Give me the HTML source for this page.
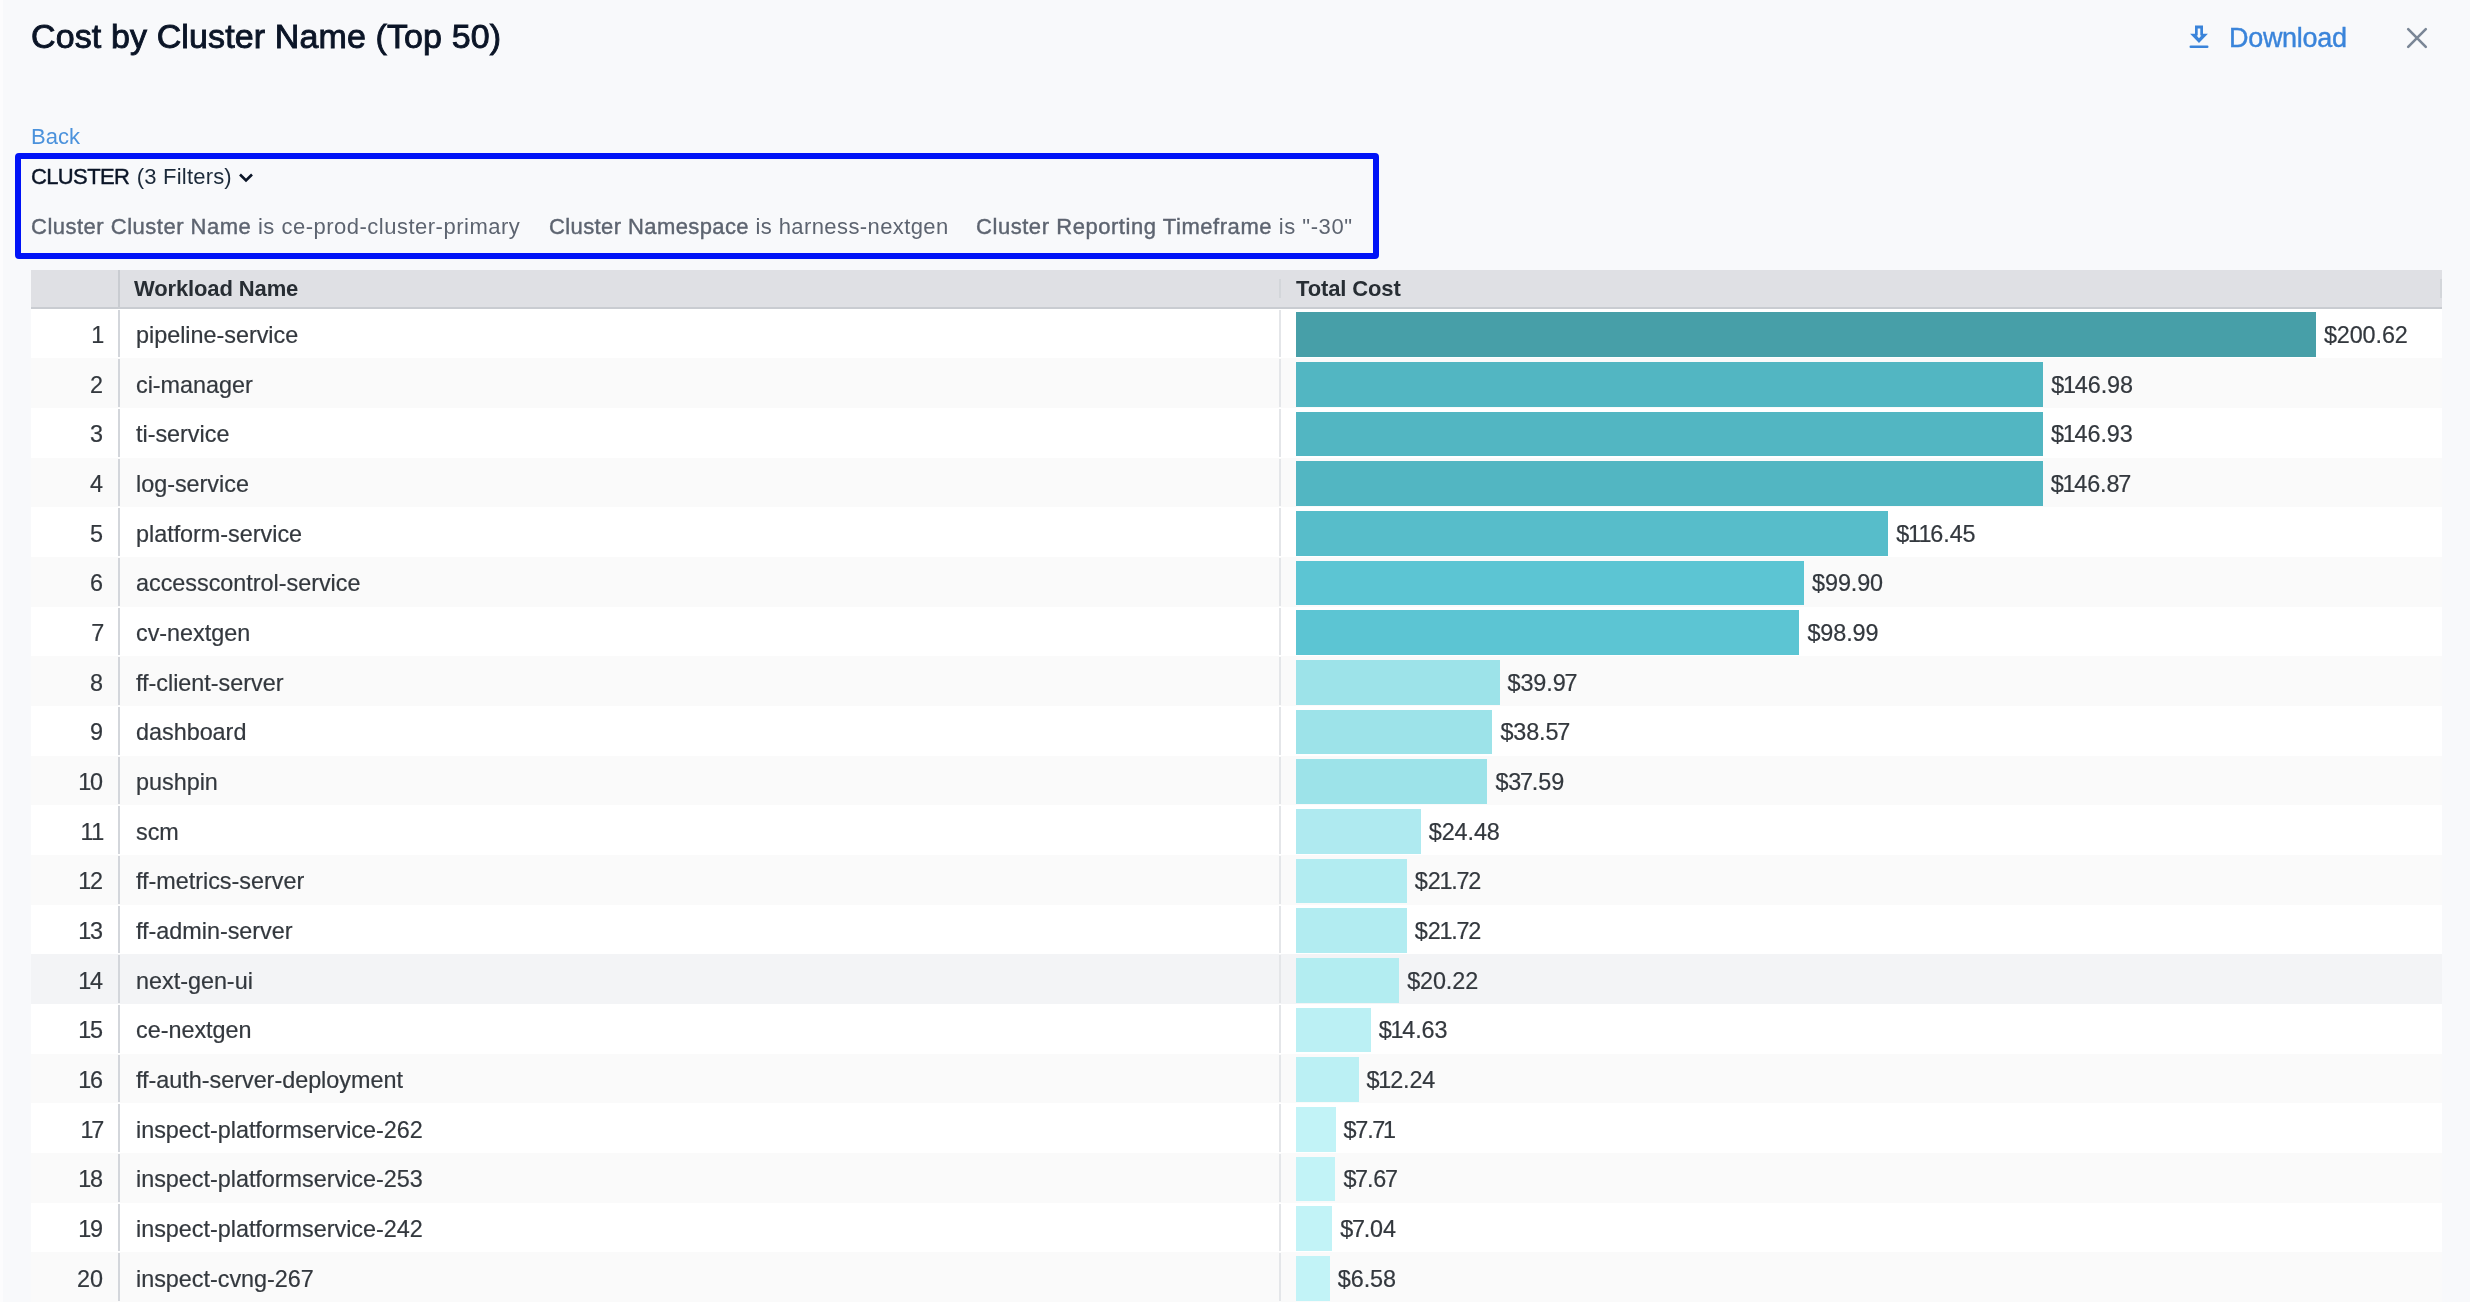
<!DOCTYPE html><html><head><meta charset="utf-8"><style>
*{margin:0;padding:0;box-sizing:border-box}
html,body{width:2470px;height:1302px;overflow:hidden;background:#f8f9fb;font-family:"Liberation Sans",sans-serif;font-variant-ligatures:none}
.a{position:absolute;white-space:pre;line-height:1}
#strip{position:absolute;left:0;top:0;width:3px;height:1302px;background:#fcfcfd}
#title{left:31px;top:19px;font-size:34px;letter-spacing:0.12px;color:#0b1527;-webkit-text-stroke:0.9px #0b1527}
#dl{left:2229px;top:24.7px;font-size:27px;letter-spacing:-0.3px;color:#3a84da;-webkit-text-stroke:0.4px #3a84da}
#back{left:31px;top:125.5px;font-size:22px;color:#4b92dc}
#box{position:absolute;left:15px;top:153px;width:1364px;height:106px;border:6px solid #0013f7;border-radius:4px}
#cl{left:31px;top:166px;letter-spacing:-0.1px;font-size:22px;color:#0b1527}
#cl b{font-weight:400;-webkit-text-stroke:0.4px #0b1527;letter-spacing:-0.63px}
#cl span{color:#1c2a3a;letter-spacing:0.2px;margin-left:1.5px}
#flt{left:31px;top:216px;font-size:22px;color:#5d6470;letter-spacing:0.5px}
#flt b{font-weight:400;-webkit-text-stroke:0.4px #5d6470}
#hdr{position:absolute;left:31px;top:270px;width:2411px;height:39px;background:#dfe0e4;border-bottom:2px solid #c9ccd1}
#sep1h{position:absolute;left:118px;top:270px;width:2px;height:37px;background:#c9ccd1}
#sep2h{position:absolute;left:1279px;top:279px;width:2px;height:19px;background:#d3d6da}
.h{font-size:22px;font-weight:700;color:#272d33;top:278px;letter-spacing:-0.13px}
.row{position:absolute;left:31px;width:2411px}
.num{position:absolute;right:0;width:72px;text-align:right;font-size:23.4px;color:#33383e;-webkit-text-stroke:0.2px #33383e}
.nm{font-size:23.4px;color:#33383e;left:136px;letter-spacing:-0.02px;-webkit-text-stroke:0.2px #33383e}
.bar{position:absolute;left:1296.4px}
.lbl{font-size:23.4px;color:#33383e;letter-spacing:-0.1px;-webkit-text-stroke:0.2px #33383e}
.nn{letter-spacing:-1.2px;margin-left:-1.2px}
.sep{position:absolute;width:2px;background:#d3d6db}
</style></head><body>
<div id="root" style="position:absolute;left:0;top:0;width:2470px;height:1302px;will-change:transform">
<div id="strip"></div>
<div class="a" id="title">Cost by Cluster Name (Top 50)</div>
<svg style="position:absolute;left:2186px;top:22px" width="26" height="28" viewBox="0 0 26 28"><path fill-rule="evenodd" fill="#3a84da" d="M9 3.5 H17 V11.8 H21.9 L13 21.1 L4.1 11.8 H9 Z M11.7 6.6 V13.6 H10.6 L13 16.2 L15.4 13.6 H14.3 V6.6 Z"/><rect x="3.5" y="23.6" width="19" height="2.4" rx="1.2" fill="#3a84da"/></svg>
<div class="a" id="dl">Download</div>
<svg style="position:absolute;left:2405px;top:26px" width="24" height="24" viewBox="0 0 24 24"><path d="M3.2 3.2 L20.8 20.8 M20.8 3.2 L3.2 20.8" stroke="#7a8696" stroke-width="2.6" stroke-linecap="round"/></svg>
<div class="a" id="back">Back</div>
<div id="box"></div>
<div class="a" id="cl"><b>CLUSTER</b> <span>(3 Filters)</span></div>
<svg style="position:absolute;left:238px;top:172px" width="16" height="12" viewBox="0 0 16 12"><path d="M2 2.5 L8 8.5 L14 2.5" fill="none" stroke="#0b1527" stroke-width="2.6"/></svg>
<div class="a" id="flt"><b>Cluster Cluster Name</b> is ce-prod-cluster-primary</div>
<div class="a" id="flt2" style="left:549px;top:216px;font-size:22px;color:#5d6470;letter-spacing:0.4px"><b style="font-weight:400;-webkit-text-stroke:0.4px #5d6470">Cluster Namespace</b> is harness-nextgen</div>
<div class="a" id="flt3" style="left:976px;top:216px;font-size:22px;color:#5d6470;letter-spacing:0.55px"><b style="font-weight:400;-webkit-text-stroke:0.4px #5d6470">Cluster Reporting Timeframe</b> is "-30"</div>
<div id="hdr"></div><div id="sep1h"></div><div id="sep2h"></div><div id="sep3h" style="position:absolute;left:2440px;top:279px;width:2px;height:19px;background:#d3d6da"></div>
<div class="a h" style="left:134px">Workload Name</div>
<div class="a h" style="left:1296px">Total Cost</div>
<div class="row" style="top:308.80px;height:49.66px;background:#ffffff"></div>
<div class="sep" style="left:118px;top:309.80px;height:47.66px"></div>
<div class="sep" style="left:1279px;top:309.80px;height:47.66px;background:#e4e6e9"></div>
<div class="a num" style="left:31px;width:72px;top:324.00px"><span class="nn">1</span></div>
<div class="a nm" style="top:324.00px">pipeline-service</div>
<div class="bar" style="top:312.30px;width:1019.50px;height:44.7px;background:#479fa8"></div>
<div class="a lbl" style="left:2323.90px;top:324.00px">$200.62</div>
<div class="row" style="top:358.46px;height:49.66px;background:#fafafa"></div>
<div class="sep" style="left:118px;top:359.46px;height:47.66px"></div>
<div class="sep" style="left:1279px;top:359.46px;height:47.66px;background:#e4e6e9"></div>
<div class="a num" style="left:31px;width:72px;top:373.66px">2</div>
<div class="a nm" style="top:373.66px">ci-manager</div>
<div class="bar" style="top:361.96px;width:746.92px;height:44.7px;background:#52b6c2"></div>
<div class="a lbl" style="left:2051.32px;top:373.66px">$<span class="nn">1</span>46.98</div>
<div class="row" style="top:408.12px;height:49.66px;background:#ffffff"></div>
<div class="sep" style="left:118px;top:409.12px;height:47.66px"></div>
<div class="sep" style="left:1279px;top:409.12px;height:47.66px;background:#e4e6e9"></div>
<div class="a num" style="left:31px;width:72px;top:423.32px">3</div>
<div class="a nm" style="top:423.32px">ti-service</div>
<div class="bar" style="top:411.62px;width:746.66px;height:44.7px;background:#52b6c2"></div>
<div class="a lbl" style="left:2051.06px;top:423.32px">$<span class="nn">1</span>46.93</div>
<div class="row" style="top:457.78px;height:49.66px;background:#fafafa"></div>
<div class="sep" style="left:118px;top:458.78px;height:47.66px"></div>
<div class="sep" style="left:1279px;top:458.78px;height:47.66px;background:#e4e6e9"></div>
<div class="a num" style="left:31px;width:72px;top:472.98px">4</div>
<div class="a nm" style="top:472.98px">log-service</div>
<div class="bar" style="top:461.28px;width:746.36px;height:44.7px;background:#52b6c2"></div>
<div class="a lbl" style="left:2050.76px;top:472.98px">$<span class="nn">1</span>46.8<span class="nn">7</span></div>
<div class="row" style="top:507.44px;height:49.66px;background:#ffffff"></div>
<div class="sep" style="left:118px;top:508.44px;height:47.66px"></div>
<div class="sep" style="left:1279px;top:508.44px;height:47.66px;background:#e4e6e9"></div>
<div class="a num" style="left:31px;width:72px;top:522.64px">5</div>
<div class="a nm" style="top:522.64px">platform-service</div>
<div class="bar" style="top:510.94px;width:591.77px;height:44.7px;background:#57bdca"></div>
<div class="a lbl" style="left:1896.17px;top:522.64px">$<span class="nn">1</span><span class="nn">1</span>6.45</div>
<div class="row" style="top:557.10px;height:49.66px;background:#fafafa"></div>
<div class="sep" style="left:118px;top:558.10px;height:47.66px"></div>
<div class="sep" style="left:1279px;top:558.10px;height:47.66px;background:#e4e6e9"></div>
<div class="a num" style="left:31px;width:72px;top:572.30px">6</div>
<div class="a nm" style="top:572.30px">accesscontrol-service</div>
<div class="bar" style="top:560.60px;width:507.67px;height:44.7px;background:#5cc5d3"></div>
<div class="a lbl" style="left:1812.07px;top:572.30px">$99.90</div>
<div class="row" style="top:606.76px;height:49.66px;background:#ffffff"></div>
<div class="sep" style="left:118px;top:607.76px;height:47.66px"></div>
<div class="sep" style="left:1279px;top:607.76px;height:47.66px;background:#e4e6e9"></div>
<div class="a num" style="left:31px;width:72px;top:621.96px"><span class="nn">7</span></div>
<div class="a nm" style="top:621.96px">cv-nextgen</div>
<div class="bar" style="top:610.26px;width:503.04px;height:44.7px;background:#5cc5d3"></div>
<div class="a lbl" style="left:1807.44px;top:621.96px">$98.99</div>
<div class="row" style="top:656.42px;height:49.66px;background:#fafafa"></div>
<div class="sep" style="left:118px;top:657.42px;height:47.66px"></div>
<div class="sep" style="left:1279px;top:657.42px;height:47.66px;background:#e4e6e9"></div>
<div class="a num" style="left:31px;width:72px;top:671.62px">8</div>
<div class="a nm" style="top:671.62px">ff-client-server</div>
<div class="bar" style="top:659.92px;width:203.12px;height:44.7px;background:#9de3e9"></div>
<div class="a lbl" style="left:1507.52px;top:671.62px">$39.9<span class="nn">7</span></div>
<div class="row" style="top:706.08px;height:49.66px;background:#ffffff"></div>
<div class="sep" style="left:118px;top:707.08px;height:47.66px"></div>
<div class="sep" style="left:1279px;top:707.08px;height:47.66px;background:#e4e6e9"></div>
<div class="a num" style="left:31px;width:72px;top:721.28px">9</div>
<div class="a nm" style="top:721.28px">dashboard</div>
<div class="bar" style="top:709.58px;width:196.00px;height:44.7px;background:#9de3e9"></div>
<div class="a lbl" style="left:1500.40px;top:721.28px">$38.5<span class="nn">7</span></div>
<div class="row" style="top:755.74px;height:49.66px;background:#fafafa"></div>
<div class="sep" style="left:118px;top:756.74px;height:47.66px"></div>
<div class="sep" style="left:1279px;top:756.74px;height:47.66px;background:#e4e6e9"></div>
<div class="a num" style="left:31px;width:72px;top:770.94px"><span class="nn">1</span>0</div>
<div class="a nm" style="top:770.94px">pushpin</div>
<div class="bar" style="top:759.24px;width:191.02px;height:44.7px;background:#9de3e9"></div>
<div class="a lbl" style="left:1495.42px;top:770.94px">$3<span class="nn">7</span>.59</div>
<div class="row" style="top:805.40px;height:49.66px;background:#ffffff"></div>
<div class="sep" style="left:118px;top:806.40px;height:47.66px"></div>
<div class="sep" style="left:1279px;top:806.40px;height:47.66px;background:#e4e6e9"></div>
<div class="a num" style="left:31px;width:72px;top:820.60px"><span class="nn">1</span><span class="nn">1</span></div>
<div class="a nm" style="top:820.60px">scm</div>
<div class="bar" style="top:808.90px;width:124.40px;height:44.7px;background:#afeaf0"></div>
<div class="a lbl" style="left:1428.80px;top:820.60px">$24.48</div>
<div class="row" style="top:855.06px;height:49.66px;background:#fafafa"></div>
<div class="sep" style="left:118px;top:856.06px;height:47.66px"></div>
<div class="sep" style="left:1279px;top:856.06px;height:47.66px;background:#e4e6e9"></div>
<div class="a num" style="left:31px;width:72px;top:870.26px"><span class="nn">1</span>2</div>
<div class="a nm" style="top:870.26px">ff-metrics-server</div>
<div class="bar" style="top:858.56px;width:110.38px;height:44.7px;background:#b2ecf1"></div>
<div class="a lbl" style="left:1414.78px;top:870.26px">$2<span class="nn">1</span>.<span class="nn">7</span>2</div>
<div class="row" style="top:904.72px;height:49.66px;background:#ffffff"></div>
<div class="sep" style="left:118px;top:905.72px;height:47.66px"></div>
<div class="sep" style="left:1279px;top:905.72px;height:47.66px;background:#e4e6e9"></div>
<div class="a num" style="left:31px;width:72px;top:919.92px"><span class="nn">1</span>3</div>
<div class="a nm" style="top:919.92px">ff-admin-server</div>
<div class="bar" style="top:908.22px;width:110.38px;height:44.7px;background:#b2ecf1"></div>
<div class="a lbl" style="left:1414.78px;top:919.92px">$2<span class="nn">1</span>.<span class="nn">7</span>2</div>
<div class="row" style="top:954.38px;height:49.66px;background:#f3f4f6"></div>
<div class="sep" style="left:118px;top:955.38px;height:47.66px"></div>
<div class="sep" style="left:1279px;top:955.38px;height:47.66px;background:#e4e6e9"></div>
<div class="a num" style="left:31px;width:72px;top:969.58px"><span class="nn">1</span>4</div>
<div class="a nm" style="top:969.58px">next-gen-ui</div>
<div class="bar" style="top:957.88px;width:102.75px;height:44.7px;background:#b3edf1"></div>
<div class="a lbl" style="left:1407.15px;top:969.58px">$20.22</div>
<div class="row" style="top:1004.04px;height:49.66px;background:#ffffff"></div>
<div class="sep" style="left:118px;top:1005.04px;height:47.66px"></div>
<div class="sep" style="left:1279px;top:1005.04px;height:47.66px;background:#e4e6e9"></div>
<div class="a num" style="left:31px;width:72px;top:1019.24px"><span class="nn">1</span>5</div>
<div class="a nm" style="top:1019.24px">ce-nextgen</div>
<div class="bar" style="top:1007.54px;width:74.35px;height:44.7px;background:#bbf0f4"></div>
<div class="a lbl" style="left:1378.75px;top:1019.24px">$<span class="nn">1</span>4.63</div>
<div class="row" style="top:1053.70px;height:49.66px;background:#fafafa"></div>
<div class="sep" style="left:118px;top:1054.70px;height:47.66px"></div>
<div class="sep" style="left:1279px;top:1054.70px;height:47.66px;background:#e4e6e9"></div>
<div class="a num" style="left:31px;width:72px;top:1068.90px"><span class="nn">1</span>6</div>
<div class="a nm" style="top:1068.90px">ff-auth-server-deployment</div>
<div class="bar" style="top:1057.20px;width:62.20px;height:44.7px;background:#bbf0f4"></div>
<div class="a lbl" style="left:1366.60px;top:1068.90px">$<span class="nn">1</span>2.24</div>
<div class="row" style="top:1103.36px;height:49.66px;background:#ffffff"></div>
<div class="sep" style="left:118px;top:1104.36px;height:47.66px"></div>
<div class="sep" style="left:1279px;top:1104.36px;height:47.66px;background:#e4e6e9"></div>
<div class="a num" style="left:31px;width:72px;top:1118.56px"><span class="nn">1</span><span class="nn">7</span></div>
<div class="a nm" style="top:1118.56px">inspect-platformservice-262</div>
<div class="bar" style="top:1106.86px;width:39.18px;height:44.7px;background:#c2f3f7"></div>
<div class="a lbl" style="left:1343.58px;top:1118.56px">$<span class="nn">7</span>.<span class="nn">7</span><span class="nn">1</span></div>
<div class="row" style="top:1153.02px;height:49.66px;background:#fafafa"></div>
<div class="sep" style="left:118px;top:1154.02px;height:47.66px"></div>
<div class="sep" style="left:1279px;top:1154.02px;height:47.66px;background:#e4e6e9"></div>
<div class="a num" style="left:31px;width:72px;top:1168.22px"><span class="nn">1</span>8</div>
<div class="a nm" style="top:1168.22px">inspect-platformservice-253</div>
<div class="bar" style="top:1156.52px;width:38.98px;height:44.7px;background:#c2f3f7"></div>
<div class="a lbl" style="left:1343.38px;top:1168.22px">$<span class="nn">7</span>.6<span class="nn">7</span></div>
<div class="row" style="top:1202.68px;height:49.66px;background:#ffffff"></div>
<div class="sep" style="left:118px;top:1203.68px;height:47.66px"></div>
<div class="sep" style="left:1279px;top:1203.68px;height:47.66px;background:#e4e6e9"></div>
<div class="a num" style="left:31px;width:72px;top:1217.88px"><span class="nn">1</span>9</div>
<div class="a nm" style="top:1217.88px">inspect-platformservice-242</div>
<div class="bar" style="top:1206.18px;width:35.78px;height:44.7px;background:#c2f3f7"></div>
<div class="a lbl" style="left:1340.18px;top:1217.88px">$<span class="nn">7</span>.04</div>
<div class="row" style="top:1252.34px;height:49.66px;background:#fafafa"></div>
<div class="sep" style="left:118px;top:1253.34px;height:47.66px"></div>
<div class="sep" style="left:1279px;top:1253.34px;height:47.66px;background:#e4e6e9"></div>
<div class="a num" style="left:31px;width:72px;top:1267.54px">20</div>
<div class="a nm" style="top:1267.54px">inspect-cvng-267</div>
<div class="bar" style="top:1255.84px;width:33.44px;height:44.7px;background:#c2f3f7"></div>
<div class="a lbl" style="left:1337.84px;top:1267.54px">$6.58</div>
</div></body></html>
